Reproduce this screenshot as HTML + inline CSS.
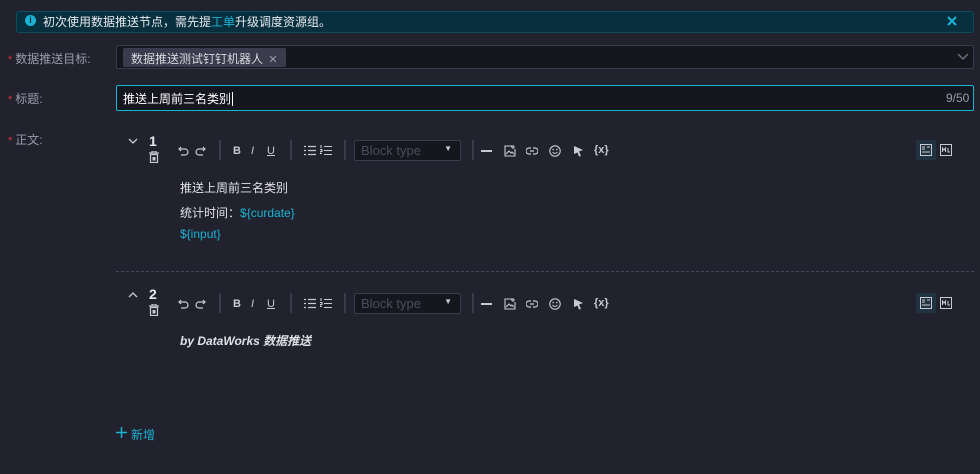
<!DOCTYPE html>
<html><head><meta charset="utf-8"><style>
*{margin:0;padding:0;box-sizing:border-box}
body{width:980px;height:474px;background:#21222d;font-family:"Liberation Sans","Noto Sans CJK SC",sans-serif;font-size:12px;color:#d8d9de;position:relative;overflow:hidden}
.a{position:absolute}
.alert{left:16px;top:11px;width:958px;height:22px;background:#072f3e;border:1px solid #0c4c5c;border-radius:3px}
.lbl{left:8px;color:#9a9cab;font-size:12px}
.lbl b{color:#e0313b;font-weight:normal;margin-right:3px;font-size:11px}
.box{left:116px;width:858px;background:#15161e;border:1px solid #3a3c4b;border-radius:2px}
.sep{width:2px;height:20px;background:#3a3c4b}
.bt{width:107px;height:21px;background:#15161e;border:1px solid #3a3c4b;border-radius:2px;color:#4b4e5c;font-size:13px;padding:2px 6px;white-space:nowrap}
.cy{color:#1ab3d3}
.tb{position:absolute;left:0;width:980px;height:30px}
.tb svg{position:absolute}
</style></head><body>
<div class="a alert"></div>
<div class="a" style="left:25px;top:15px;width:11px;height:11px;border-radius:50%;background:#1ab3d3;color:#072f3e;font-size:9px;font-weight:bold;text-align:center;line-height:11px">i</div>
<div class="a" style="left:43px;top:13px;color:#e8e9ee">初次使用数据推送节点，需先提<span class="cy">工单</span>升级调度资源组。</div>
<svg class="a" style="left:947px;top:16px" width="10" height="10"><path d="M1 1l8 8M9 1l-8 8" stroke="#1ab3d3" stroke-width="2"/></svg>

<div class="a lbl" style="top:50px"><b>*</b>数据推送目标:</div>
<div class="a box" style="top:45px;height:24px"></div>
<div class="a" style="left:123px;top:48px;height:19px;background:#3a3c4d;border-radius:2px;color:#d8d9de;padding:2px 8px;white-space:nowrap">数据推送测试钉钉机器人 <span style="color:#9a9cab;font-size:11px;margin-left:2px">✕</span></div>
<svg class="a" style="left:957px;top:53px" width="12" height="8"><path d="M1 1l5 5 5-5" stroke="#6c6f7e" stroke-width="1.5" fill="none"/></svg>

<div class="a lbl" style="top:90px"><b>*</b>标题:</div>
<div class="a box" style="top:85px;height:26px;border-color:#12b6d6"></div>
<div class="a" style="left:123px;top:90px;color:#fff">推送上周前三名类别<span style="border-left:1px solid #fff;margin-left:1px"></span></div>
<div class="a" style="left:946px;top:91px;color:#9a9cab">9/50</div>

<div class="a lbl" style="top:131px"><b>*</b>正文:</div>

<!-- toolbar template -->
<div class="tb" style="top:136px">
<svg style="left:128px;top:2px" width="10" height="7"><path d="M1 1l4 4 4-4" stroke="#c9cad1" stroke-width="1.3" fill="none"/></svg>
<div class="a" style="left:149px;top:-3px;font-weight:bold;font-size:14px;color:#e8e9ee">1</div>
<svg style="left:149px;top:15px" width="10" height="12"><path d="M0 2h10M3 2V0h4v2M1.5 3.5h7v8h-7z" stroke="#c9cad1" stroke-width="1.2" fill="none"/><rect x="3.5" y="6" width="3" height="3.5" fill="#c9cad1"/></svg>
<svg style="left:178px;top:10px" width="11" height="10"><path d="M3 1L1 3l2 2M1 3h6a3 3 0 010 6H3" stroke="#c9cad1" stroke-width="1.2" fill="none"/></svg>
<svg style="left:195px;top:10px" width="11" height="10"><path d="M8 1l2 2-2 2M10 3H4a3 3 0 000 6h4" stroke="#c9cad1" stroke-width="1.2" fill="none"/></svg>
<div class="a sep" style="left:219px;top:4px"></div>
<div class="a" style="left:233px;top:9px;font-weight:bold;font-size:11px;color:#c9cad1">B</div>
<div class="a" style="left:251px;top:9px;font-style:italic;font-size:11px;color:#c9cad1">I</div>
<div class="a" style="left:267px;top:9px;text-decoration:underline;font-size:11px;color:#c9cad1">U</div>
<div class="a sep" style="left:290px;top:4px"></div>
<svg style="left:304px;top:9px" width="12" height="11"><path d="M0 1.5h2M0 5.5h2M0 9.5h2M4 1.5h8M4 5.5h8M4 9.5h8" stroke="#c9cad1" stroke-width="1.3"/></svg>
<svg style="left:320px;top:9px" width="12" height="11"><path d="M1 0v3M0 4.5h2v2H0v2h2M4 1.5h8M4 5.5h8M4 9.5h8" stroke="#c9cad1" stroke-width="1.1" fill="none"/></svg>
<div class="a sep" style="left:344px;top:4px"></div>
<div class="a bt" style="left:354px;top:4px">Block type<span style="position:absolute;right:8px;top:3px;font-size:8px;color:#c9cad1">▼</span></div>
<div class="a sep" style="left:472px;top:4px"></div>
<div class="a" style="left:481px;top:14px;width:11px;height:2px;background:#c9cad1"></div>
<svg style="left:504px;top:9px" width="12" height="12"><path d="M8 1H1v10h10V4M9 0v4M7 2h4M2 9l3-3 2 2 1-1 2 2" stroke="#c9cad1" stroke-width="1.1" fill="none"/></svg>
<svg style="left:526px;top:11px" width="12" height="8"><path d="M5 1H3a3 3 0 000 6h2M7 1h2a3 3 0 010 6H7M4 4h4" stroke="#c9cad1" stroke-width="1.2" fill="none"/></svg>
<svg style="left:549px;top:9px" width="12" height="12"><circle cx="6" cy="6" r="5.2" stroke="#c9cad1" stroke-width="1.1" fill="none"/><path d="M3.5 7a3 3 0 005 0" stroke="#c9cad1" fill="none"/><circle cx="4.2" cy="4.5" r=".8" fill="#c9cad1"/><circle cx="7.8" cy="4.5" r=".8" fill="#c9cad1"/></svg>
<svg style="left:573px;top:9px" width="11" height="12"><path d="M1 1l9 4-4 1.5L8 11 6 11.5 4.5 7.5 1 9z" fill="#c9cad1"/></svg>
<div class="a" style="left:594px;top:8px;font-weight:bold;font-size:11px;color:#c9cad1">{x}</div>
<div class="a" style="left:916px;top:4px;width:20px;height:20px;background:#1f3440"></div>
<svg style="left:920px;top:8px" width="12" height="12"><rect x=".5" y=".5" width="11" height="11" stroke="#c9cad1" fill="none"/><path d="M2 3h3M7 3h3M2 8h8M2 5h3" stroke="#c9cad1"/></svg>
<svg style="left:940px;top:8px" width="12" height="12"><rect x=".5" y=".5" width="11" height="11" stroke="#c9cad1" fill="none"/><path d="M2.5 8V4l1.5 2 1.5-2v4M8 4v4h2" stroke="#c9cad1" fill="none"/></svg>
</div>

<div class="a" style="left:180px;top:179px;color:#e0e1e6">推送上周前三名类别</div>
<div class="a" style="left:180px;top:204px;color:#e0e1e6">统计时间：<span class="cy">${curdate}</span></div>
<div class="a cy" style="left:180px;top:227px">${input}</div>

<div class="a" style="left:116px;top:271px;width:858px;border-top:1px dashed #44465a"></div>

<div class="tb" style="top:289px">
<svg style="left:128px;top:2px" width="10" height="7"><path d="M1 6l4-4 4 4" stroke="#c9cad1" stroke-width="1.3" fill="none"/></svg>
<div class="a" style="left:149px;top:-3px;font-weight:bold;font-size:14px;color:#e8e9ee">2</div>
<svg style="left:149px;top:15px" width="10" height="12"><path d="M0 2h10M3 2V0h4v2M1.5 3.5h7v8h-7z" stroke="#c9cad1" stroke-width="1.2" fill="none"/><rect x="3.5" y="6" width="3" height="3.5" fill="#c9cad1"/></svg>
<svg style="left:178px;top:10px" width="11" height="10"><path d="M3 1L1 3l2 2M1 3h6a3 3 0 010 6H3" stroke="#c9cad1" stroke-width="1.2" fill="none"/></svg>
<svg style="left:195px;top:10px" width="11" height="10"><path d="M8 1l2 2-2 2M10 3H4a3 3 0 000 6h4" stroke="#c9cad1" stroke-width="1.2" fill="none"/></svg>
<div class="a sep" style="left:219px;top:4px"></div>
<div class="a" style="left:233px;top:9px;font-weight:bold;font-size:11px;color:#c9cad1">B</div>
<div class="a" style="left:251px;top:9px;font-style:italic;font-size:11px;color:#c9cad1">I</div>
<div class="a" style="left:267px;top:9px;text-decoration:underline;font-size:11px;color:#c9cad1">U</div>
<div class="a sep" style="left:290px;top:4px"></div>
<svg style="left:304px;top:9px" width="12" height="11"><path d="M0 1.5h2M0 5.5h2M0 9.5h2M4 1.5h8M4 5.5h8M4 9.5h8" stroke="#c9cad1" stroke-width="1.3"/></svg>
<svg style="left:320px;top:9px" width="12" height="11"><path d="M1 0v3M0 4.5h2v2H0v2h2M4 1.5h8M4 5.5h8M4 9.5h8" stroke="#c9cad1" stroke-width="1.1" fill="none"/></svg>
<div class="a sep" style="left:344px;top:4px"></div>
<div class="a bt" style="left:354px;top:4px">Block type<span style="position:absolute;right:8px;top:3px;font-size:8px;color:#c9cad1">▼</span></div>
<div class="a sep" style="left:472px;top:4px"></div>
<div class="a" style="left:481px;top:14px;width:11px;height:2px;background:#c9cad1"></div>
<svg style="left:504px;top:9px" width="12" height="12"><path d="M8 1H1v10h10V4M9 0v4M7 2h4M2 9l3-3 2 2 1-1 2 2" stroke="#c9cad1" stroke-width="1.1" fill="none"/></svg>
<svg style="left:526px;top:11px" width="12" height="8"><path d="M5 1H3a3 3 0 000 6h2M7 1h2a3 3 0 010 6H7M4 4h4" stroke="#c9cad1" stroke-width="1.2" fill="none"/></svg>
<svg style="left:549px;top:9px" width="12" height="12"><circle cx="6" cy="6" r="5.2" stroke="#c9cad1" stroke-width="1.1" fill="none"/><path d="M3.5 7a3 3 0 005 0" stroke="#c9cad1" fill="none"/><circle cx="4.2" cy="4.5" r=".8" fill="#c9cad1"/><circle cx="7.8" cy="4.5" r=".8" fill="#c9cad1"/></svg>
<svg style="left:573px;top:9px" width="11" height="12"><path d="M1 1l9 4-4 1.5L8 11 6 11.5 4.5 7.5 1 9z" fill="#c9cad1"/></svg>
<div class="a" style="left:594px;top:8px;font-weight:bold;font-size:11px;color:#c9cad1">{x}</div>
<div class="a" style="left:916px;top:4px;width:20px;height:20px;background:#1f3440"></div>
<svg style="left:920px;top:8px" width="12" height="12"><rect x=".5" y=".5" width="11" height="11" stroke="#c9cad1" fill="none"/><path d="M2 3h3M7 3h3M2 8h8M2 5h3" stroke="#c9cad1"/></svg>
<svg style="left:940px;top:8px" width="12" height="12"><rect x=".5" y=".5" width="11" height="11" stroke="#c9cad1" fill="none"/><path d="M2.5 8V4l1.5 2 1.5-2v4M8 4v4h2" stroke="#c9cad1" fill="none"/></svg>
</div>

<div class="a" style="left:180px;top:332px;color:#e0e1e6;font-style:italic;font-weight:bold;font-size:12px">by DataWorks 数据推送</div>

<svg class="a" style="left:116px;top:427px" width="11" height="11"><path d="M5.5 0v11M0 5.5h11" stroke="#1ab3d3" stroke-width="1.5"/></svg>
<div class="a cy" style="left:131px;top:426px;font-size:12px">新增</div>
</body></html>
